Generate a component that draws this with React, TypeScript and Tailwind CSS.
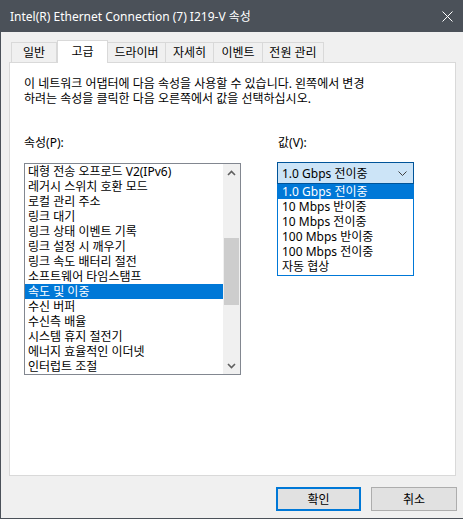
import React from 'react';

const tabs = [
  { label: '일반', w: 'w-[46px]' },
  { label: '고급', w: 'w-[51px]', active: true },
  { label: '드라이버', w: 'w-[58px]' },
  { label: '자세히', w: 'w-[48px]' },
  { label: '이벤트', w: 'w-[49px]' },
  { label: '전원 관리', w: 'w-[61px]' },
];

const properties = [
  '대형 전송 오프로드 V2(IPv6)',
  '레거시 스위치 호환 모드',
  '로컬 관리 주소',
  '링크 대기',
  '링크 상태 이벤트 기록',
  '링크 설정 시 깨우기',
  '링크 속도 배터리 절전',
  '소프트웨어 타임스탬프',
  '속도 및 이중',
  '수신 버퍼',
  '수신측 배율',
  '시스템 휴지 절전기',
  '에너지 효율적인 이더넷',
  '인터럽트 조절',
];

const values = [
  '1.0 Gbps 전이중',
  '10 Mbps 반이중',
  '10 Mbps 전이중',
  '100 Mbps 반이중',
  '100 Mbps 전이중',
  '자동 협상',
];

const Chevron = ({ up = false }: { up?: boolean }) => (
  <svg width="9" height="6" viewBox="0 0 9 6" className={up ? '' : 'rotate-180'}>
    <polyline points="1,5 4.5,1.5 8,5" fill="none" stroke="#606060" strokeWidth="1.6" />
  </svg>
);

export default function App() {
  return (
    <div className="w-[463px] h-[519px] flex flex-col bg-[#f0f0f0] border-l border-b border-[#4b5159] text-black text-[12px] leading-[15px] font-['Noto_Sans','Noto_Sans_CJK_KR',sans-serif]">
      {/* 제목 표시줄 */}
      <div className="h-[32px] shrink-0 bg-[#4b5159] text-white flex items-center justify-between pl-[9px] pr-[10px]">
        <span className="text-[12px]">Intel(R) Ethernet Connection (7) I219-V 속성</span>
        <svg width="11" height="11" viewBox="0 0 11 11">
          <path d="M0.5 0.5 L10.5 10.5 M10.5 0.5 L0.5 10.5" stroke="#ffffff" strokeWidth="1" />
        </svg>
      </div>

      <div className="flex-1 flex flex-col pt-[8px]">
        {/* 탭 */}
        <div className="flex items-end h-[22px] pl-[10px]">
          {tabs.map((t, i) =>
            t.active ? (
              <div
                key={t.label}
                className={`${t.w} h-[23px] -mb-px relative z-10 bg-white border border-b-0 border-[#d9d9d9] flex items-start justify-center pt-[3px]`}
              >
                {t.label}
              </div>
            ) : (
              <div
                key={t.label}
                className={`${t.w} h-[20px] bg-[#f0f0f0] border-t border-r border-[#d9d9d9] ${i === 0 ? 'border-l' : ''} flex items-center justify-center`}
              >
                {t.label}
              </div>
            )
          )}
        </div>

        {/* 탭 패널 */}
        <div className="ml-[8px] w-[447px] h-[414px] bg-white border border-[#d9d9d9] pl-[14px] pt-[13px]">
          <p>
            이 네트워크 어댑터에 다음 속성을 사용할 수 있습니다. 왼쪽에서 변경
            <br />
            하려는 속성을 클릭한 다음 오른쪽에서 값을 선택하십시오.
          </p>

          <div className="flex mt-[29px] gap-[36px]">
            {/* 속성 */}
            <div className="w-[217px]">
              <div className="h-[15px]">속성(P):</div>
              <div className="mt-[13px] h-[212px] border border-[#828790] flex">
                <div className="flex-1 pt-0">
                  {properties.map((p) => (
                    <div
                      key={p}
                      className={`h-[15px] pl-[3px] whitespace-nowrap overflow-hidden ${
                        p === '속도 및 이중' ? 'bg-[#0078d7] text-white' : ''
                      }`}
                    >
                      {p}
                    </div>
                  ))}
                </div>
                <div className="w-[17px] bg-[#f0f0f0] flex flex-col">
                  <div className="h-[17px] flex items-center justify-center">
                    <Chevron up />
                  </div>
                  <div className="flex-1 px-[1px] pt-[57px]">
                    <div className="h-[67px] bg-[#cdcdcd]" />
                  </div>
                  <div className="h-[17px] flex items-center justify-center">
                    <Chevron />
                  </div>
                </div>
              </div>
            </div>

            {/* 값 */}
            <div className="w-[137px]">
              <div className="h-[15px] pl-px">값(V):</div>
              <div className="relative mt-[12px]">
                <div className="h-[22px] bg-[#cce4f7] border border-[#005499] flex items-center justify-between pl-[4px] pr-[6px]">
                  <span>1.0 Gbps 전이중</span>
                  <svg width="9" height="5" viewBox="0 0 9 5">
                    <polyline points="0.5,0.5 4.5,4.5 8.5,0.5" fill="none" stroke="#404040" strokeWidth="1" />
                  </svg>
                </div>
                <div className="absolute left-0 top-[22px] w-[137px] bg-white border border-t-0 border-[#0078d7] pb-px">
                  {values.map((v, i) => (
                    <div
                      key={v}
                      className={`h-[15px] pl-[4px] ${i === 0 ? 'bg-[#0078d7] text-white' : ''}`}
                    >
                      {v}
                    </div>
                  ))}
                </div>
              </div>
            </div>
          </div>
        </div>

        {/* 버튼 */}
        <div className="flex justify-end gap-[10px] pr-[6px] mt-[11px]">
          <button className="w-[85px] h-[24px] bg-[#e1e1e1] border-2 border-[#0078d7] flex items-center justify-center">
            확인
          </button>
          <button className="w-[86px] h-[24px] bg-[#e1e1e1] border border-[#adadad] flex items-center justify-center">
            취소
          </button>
        </div>
      </div>
    </div>
  );
}
